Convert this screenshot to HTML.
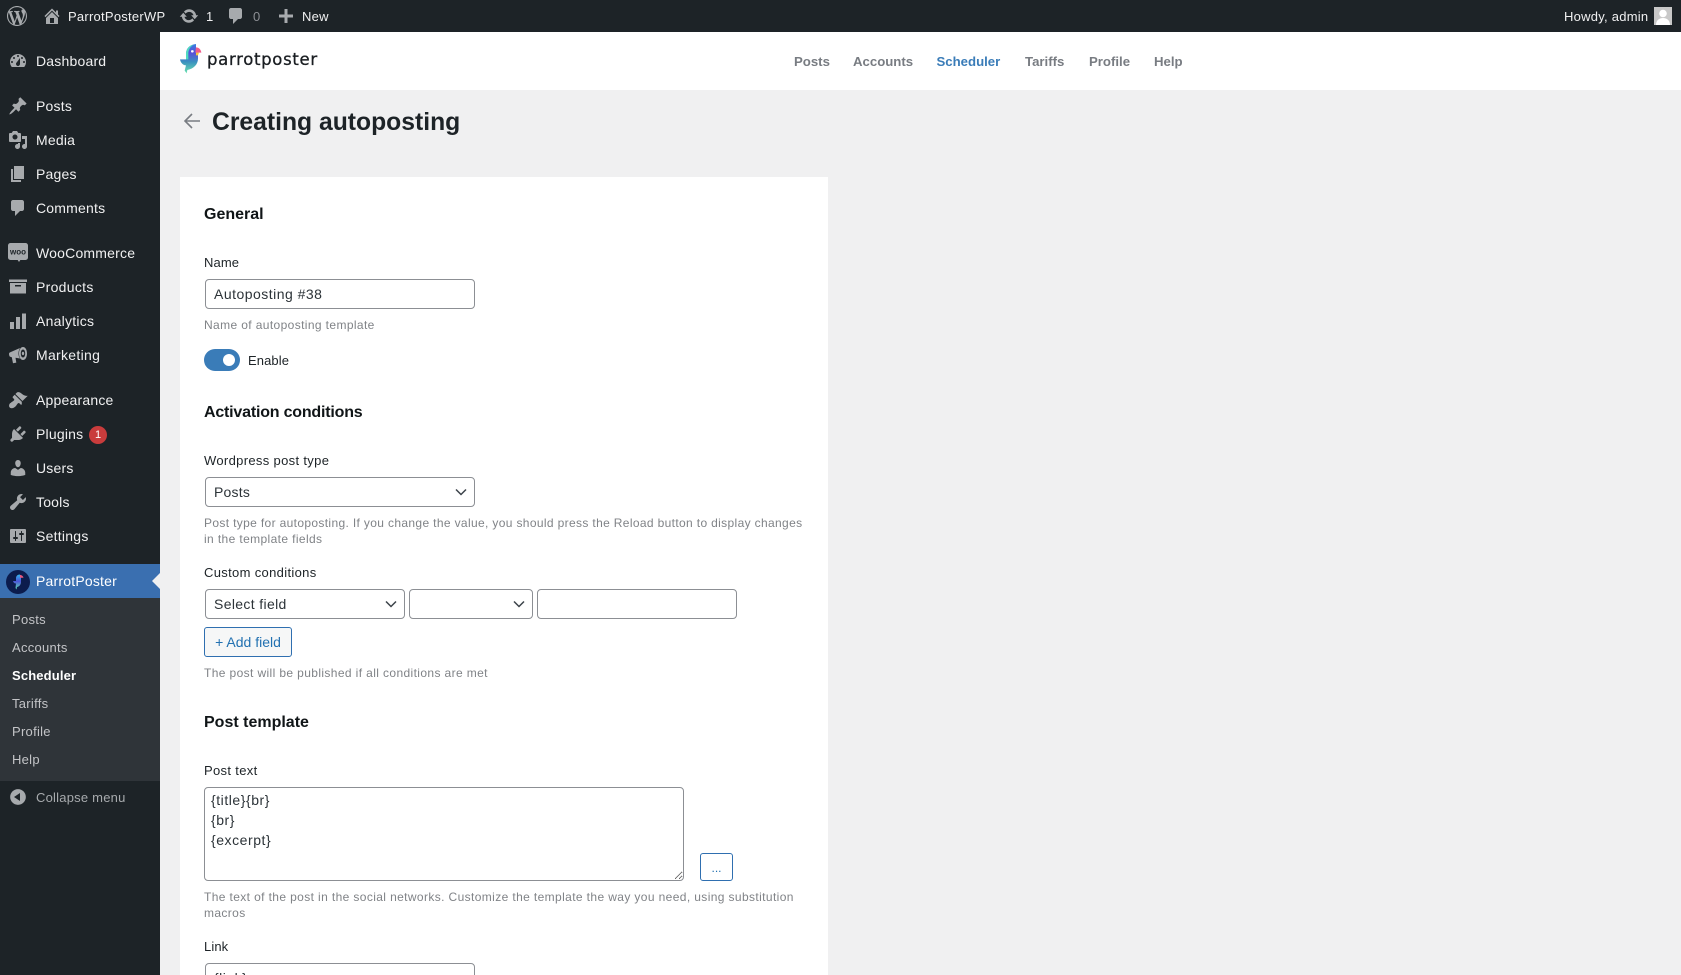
<!DOCTYPE html>
<html lang="en"><head><meta charset="utf-8"><title>Creating autoposting</title>
<style>
*{box-sizing:border-box}
html,body{margin:0;padding:0;width:1681px;height:975px;overflow:hidden;background:#f0f0f1;font-family:"Liberation Sans",sans-serif}
#wrap{position:relative;width:1681px;height:975px;overflow:hidden;background:#f0f0f1}
.a{position:absolute}
.t{position:absolute;white-space:nowrap;line-height:20px;height:20px}
.i{position:absolute;width:20px;height:20px;fill:#a7aaad}
#bar{left:0;top:0;width:1681px;height:32px;background:#1d2327}
#bar .t{font-size:13px;color:#f0f0f1;letter-spacing:.25px}
#side{left:0;top:32px;width:160px;height:943px;background:#1d2327}
.m{font-size:14px;color:#f0f0f1;left:36px;letter-spacing:.2px}
.s{font-size:13px;color:#c3c4c7;left:12px;letter-spacing:.28px}
.n{font-size:13.2px;font-weight:700;color:#787c82;top:52px}
h2{margin:0;font-size:16px;font-weight:700;color:#101517;left:204px}
.l{font-size:13px;color:#1d2327;left:204px;letter-spacing:.1px}
.w{letter-spacing:.33px}
.h{font-size:12px;color:#808387;left:204px;letter-spacing:.38px;line-height:16px;height:16px}
.f{position:absolute;background:#fff;border:1px solid #8c8f94;border-radius:4px;font:14px "Liberation Sans",sans-serif;color:#2c3338;padding:0 8px;margin:0;height:30px;appearance:none;-webkit-appearance:none;outline:0;letter-spacing:.48px}
.c{position:absolute;width:12px;height:8px;fill:none;stroke:#3c434a;stroke-width:1.5}
</style></head><body>
<div id="wrap">

<div class="a" id="bar">
<svg class="i" style="left:7px;top:6px" viewBox="0 0 20 20"><path fill-rule="evenodd" d="M20 10c0-5.51-4.49-10-10-10C4.48 0 0 4.49 0 10c0 5.52 4.48 10 10 10 5.51 0 10-4.48 10-10zM7.78 15.37L4.37 6.22c.55-.02 1.17-.08 1.17-.08.5-.06.44-1.13-.06-1.11 0 0-1.45.11-2.37.11-.18 0-.37 0-.58-.01C4.12 2.69 6.87 1.11 10 1.11c2.33 0 4.45.87 6.05 2.34-.68-.11-1.65.39-1.65 1.58 0 .74.45 1.36.9 2.1.35.61.55 1.36.55 2.46 0 1.49-1.4 5-1.4 5l-3.03-8.37c.54-.02.82-.17.82-.17.5-.05.44-1.25-.06-1.22 0 0-1.44.12-2.38.12-.87 0-2.33-.12-2.33-.12-.5-.03-.56 1.2-.06 1.22l.92.08 1.26 3.41zM17.41 10c.24-.64.74-1.87.43-4.25.7 1.29 1.05 2.71 1.05 4.25 0 3.29-1.73 6.24-4.4 7.78.97-2.59 1.94-5.2 2.92-7.78zM6.1 18.09C3.12 16.65 1.11 13.53 1.11 10c0-1.3.23-2.48.72-3.59C3.25 10.3 4.67 14.2 6.1 18.09zm4.03-6.63l2.58 6.98c-.86.29-1.76.45-2.71.45-.79 0-1.57-.11-2.29-.33.81-2.38 1.62-4.74 2.42-7.1z"/></svg>
<svg class="i" style="left:42px;top:6px" viewBox="0 0 20 20"><path fill-rule="evenodd" d="M16 8.5l1.53 1.53-1.06 1.06L10 4.62l-6.47 6.47-1.06-1.06L10 2.5l4 4v-2h2v4zm-6-2.46l6 5.99V18H4v-5.97zM12 17v-5H8v5h4z"/></svg>
<div class="t" style="left:68px;top:7px">ParrotPosterWP</div>
<svg class="i" style="left:179px;top:6px" viewBox="0 0 20 20"><path d="M10.2 3.28c3.53 0 6.43 2.61 6.92 6h2.08l-3.5 4-3.5-4h2.32c-.45-1.97-2.21-3.45-4.32-3.45-1.45 0-2.73.71-3.54 1.78L4.95 5.66C6.23 4.2 8.11 3.28 10.2 3.28zm-.4 13.44c-3.52 0-6.43-2.61-6.92-6H.8l3.5-4c1.17 1.33 2.33 2.67 3.5 4H5.48c.45 1.97 2.21 3.45 4.32 3.45 1.45 0 2.73-.71 3.54-1.78l1.71 1.95c-1.28 1.46-3.15 2.38-5.25 2.38z"/></svg>
<div class="t" style="left:206px;top:7px">1</div>
<svg class="i" style="left:226px;top:6px" viewBox="0 0 20 20"><path d="M5 2h9c1.1 0 2 .9 2 2v7c0 1.100-.9 2-2 2h-2l-5 5v-5H5c-1.100 0-2-.9-2-2V4c0-1.100.9-2 2-2z"/></svg>
<div class="t" style="left:253px;top:7px;color:#8c8f94">0</div>
<svg class="i" style="left:276px;top:6px" viewBox="0 0 20 20"><path d="M17 8.500v3h-5.500V17h-3v-5.500H3v-3h5.500V3h3v5.500z"/></svg>
<div class="t" style="left:302px;top:7px">New</div>
<div class="t" style="left:1564px;top:7px">Howdy, admin</div>
<svg class="a" style="left:1654px;top:7px" width="18" height="18" viewBox="0 0 18 18"><rect width="18" height="18" fill="#c8c8c8"/><circle cx="9" cy="6.500" r="3.800" fill="#fff"/><path d="M2 18c0-4.500 3-7 7-7s7 2.500 7 7z" fill="#fff"/></svg>
</div>

<div class="a" id="side">
<div class="a" style="left:0;top:532px;width:160px;height:34px;background:#3a6fb0"></div>
<div class="a" style="left:0;top:566px;width:160px;height:183px;background:#2f3439"></div>
<div class="a" style="left:152px;top:541px;width:0;height:0;border:8px solid transparent;border-right-color:#f0f0f1;border-left:0"></div>
</div>

<svg class="i" style="left:8px;top:51px" viewBox="0 0 20 20"><path fill-rule="evenodd" d="M3.760 16h12.480c1.100-1.370 1.760-3.110 1.760-5 0-4.420-3.580-8-8-8s-8 3.580-8 8c0 1.890.66 3.630 1.760 5zM10 4c.55 0 1 .45 1 1s-.45 1-1 1-1-.45-1-1 .45-1 1-1zM6 6c.55 0 1 .45 1 1s-.45 1-1 1-1-.45-1-1 .45-1 1-1zm8 0c.55 0 1 .45 1 1s-.45 1-1 1-1-.45-1-1 .45-1 1-1zm-5.370 5.550L12 7v6c0 1.100-.9 2-2 2s-2-.9-2-2c0-.57.24-1.080.63-1.450zM4 10c.55 0 1 .45 1 1s-.45 1-1 1-1-.45-1-1 .45-1 1-1zm12 0c.55 0 1 .45 1 1s-.45 1-1 1-1-.45-1-1 .45-1 1-1z"/></svg>
<div class="t m" style="top:51px">Dashboard</div>
<svg class="i" style="left:8px;top:96px" viewBox="0 0 20 20"><path d="M10.440 3.020l1.820-1.820 6.360 6.350-1.830 1.820c-1.050-.68-2.480-.57-3.410.36l-.75.75c-.92.93-1.040 2.350-.35 3.410l-1.830 1.820-2.410-2.410-2.800 2.790c-.42.42-3.380 2.710-3.800 2.290s1.860-3.390 2.280-3.810l2.790-2.790L4.100 9.360l1.830-1.820c1.050.69 2.480.57 3.400-.36l.75-.75c.93-.92 1.050-2.350.36-3.410z"/></svg>
<div class="t m" style="top:96px">Posts</div>
<svg class="i" style="left:8px;top:130px" viewBox="0 0 20 20"><path fill-rule="evenodd" d="M13 11V4c0-.55-.45-1-1-1h-1.670L9 1H5L3.670 3H2c-.55 0-1 .45-1 1v7c0 .55.45 1 1 1h10c.55 0 1-.45 1-1zM7 4.500c1.380 0 2.500 1.120 2.500 2.500S8.380 9.500 7 9.500 4.500 8.380 4.500 7 5.620 4.500 7 4.500zM14 6h5v10.500c0 1.380-1.120 2.500-2.500 2.500S14 17.880 14 16.500s1.120-2.500 2.500-2.500c.17 0 .34.02.5.05V9h-3V6zm-4 8.050V13h2v3.500c0 1.380-1.120 2.500-2.500 2.500S7 17.880 7 16.500 8.120 14 9.500 14c.17 0 .34.02.5.05z"/></svg>
<div class="t m" style="top:130px">Media</div>
<svg class="i" style="left:8px;top:164px" viewBox="0 0 20 20"><path d="M6 15V2h10v13H6zm-1 1h8v2H3V5h2v11z"/></svg>
<div class="t m" style="top:164px">Pages</div>
<svg class="i" style="left:8px;top:198px" viewBox="0 0 20 20"><path d="M5 2h9c1.100 0 2 .9 2 2v7c0 1.100-.9 2-2 2h-2l-5 5v-5H5c-1.100 0-2-.9-2-2V4c0-1.100.9-2 2-2z"/></svg>
<div class="t m" style="top:198px">Comments</div>

<svg class="i" style="left:8px;top:243px" viewBox="0 0 20 20"><rect x="0" y="0" width="20" height="17" rx="2.500"/><path d="M9 16h4l-2 3z"/><text x="10" y="11.500" text-anchor="middle" font-size="8" font-weight="700" font-family="Liberation Sans" fill="#1d2327">woo</text></svg>
<div class="t m" style="top:243px">WooCommerce</div>
<svg class="i" style="left:8px;top:277px" viewBox="0 0 20 20"><path fill-rule="evenodd" d="M1 2.500h18V5H1zM2 6h16v10.500H2zM7 8v1.500h6V8z"/></svg>
<div class="t m" style="top:277px;letter-spacing:.3px">Products</div>
<svg class="i" style="left:8px;top:311px" viewBox="0 0 20 20"><path d="M2 11h4v7H2zM8 6h4v12H8zM14 2.500h4V18h-4z"/></svg>
<div class="t m" style="top:311px;letter-spacing:.25px">Analytics</div>
<svg class="i" style="left:8px;top:345px" viewBox="0 0 20 20"><path fill-rule="evenodd" d="M1 9c0-.9.500-1.400 1.300-1.700L12 3c-1 1.500-1.500 3.500-1.500 5.500s.5 3.800 1.500 5l-4.500-.7.8 4.800-3.300.6-1.200-6-2-.6C1.500 11.100 1 10.300 1 9zM15 2c2.500 0 4 3 4 6.500S17.500 15 15 15s-4-3-4-6.500S12.500 2 15 2zm0 2.500c-1.300 0-2.200 1.800-2.200 4s.9 4 2.200 4 2.200-1.800 2.200-4-.9-4-2.200-4zm0 2.300c.8 0 1.200.8 1.200 1.700s-.4 1.700-1.200 1.700-1.200-.8-1.200-1.700.4-1.700 1.200-1.700z"/></svg>
<div class="t m" style="top:345px;letter-spacing:.3px">Marketing</div>

<svg class="i" style="left:8px;top:390px" viewBox="0 0 20 20"><path d="M14.480 11.060L7.410 3.990l1.500-1.500c.5-.56 2.300-.47 3.510.32 1.210.8 1.430 1.280 2.910 2.100 1.180.64 2.450 1.260 4.450.85zm-.71.71L6.700 4.700 4.930 6.470c-.39.39-.39 1.020 0 1.410l1.060 1.060c.39.39.39 1.030 0 1.420-.6.6-1.430 1.110-2.210 1.690-.35.26-.7.53-1.010.84C1.430 13.230.28 16.080 1.760 17.560s4.330.32 5.680-1.020c.31-.31.58-.66.85-1.020.57-.78 1.080-1.610 1.690-2.210.39-.39 1.020-.39 1.410 0l1.060 1.060c.39.39 1.020.39 1.410 0z"/></svg>
<div class="t m" style="top:390px">Appearance</div>
<svg class="i" style="left:8px;top:424px" viewBox="0 0 20 20"><path d="M13.110 4.360L9.870 7.600 8 5.730l3.240-3.240c.35-.34 1.050-.2 1.560.32.52.51.66 1.210.31 1.550zm-8 1.770l.91-1.120 9.010 9.010-1.190.84c-.71.71-2.630 1.160-3.820 1.160H6.140L4.900 17.260c-.59.59-1.540.59-2.120 0-.59-.58-.59-1.530 0-2.120l1.240-1.240v-3.880c0-1.130.4-3.190 1.090-3.890zm7.260 3.970l3.240-3.240c.34-.35 1.040-.21 1.550.31.52.51.66 1.210.31 1.550l-3.240 3.250z"/></svg>
<div class="t m" style="top:424px">Plugins</div>
<div class="a" style="left:89px;top:426px;width:18px;height:18px;border-radius:9px;background:#c93c3c;color:#fff;font-size:11px;line-height:18px;text-align:center">1</div>
<svg class="i" style="left:8px;top:458px" viewBox="0 0 20 20"><path d="M10 9.250c-2.270 0-2.730-3.440-2.730-3.440C7 4.020 7.820 2 9.970 2c2.160 0 2.980 2.020 2.710 3.810 0 0-.41 3.440-2.680 3.440zm0 2.570L12.720 10c2.390 0 4.520 2.330 4.520 4.530v2.490s-3.650 1.130-7.240 1.130c-3.650 0-7.240-1.130-7.240-1.130v-2.490c0-2.250 1.940-4.480 4.470-4.480z"/></svg>
<div class="t m" style="top:458px">Users</div>
<svg class="i" style="left:8px;top:492px" viewBox="0 0 20 20"><path d="M16.680 9.770c-1.340 1.340-3.300 1.670-4.950.99l-5.410 6.520c-.99.99-2.590.99-3.580 0s-.99-2.590 0-3.570l6.520-5.420c-.68-1.650-.35-3.610.99-4.950 1.280-1.280 3.120-1.620 4.720-1.060l-2.890 2.890 2.820 2.820 2.860-2.870c.53 1.580.18 3.390-1.080 4.650z"/></svg>
<div class="t m" style="top:492px">Tools</div>
<svg class="i" style="left:8px;top:526px" viewBox="0 0 20 20"><path fill-rule="evenodd" d="M18 16V4c0-.55-.45-1-1-1H3c-.55 0-1 .45-1 1v12c0 .55.45 1 1 1h14c.55 0 1-.45 1-1zM8 11h1c.55 0 1 .45 1 1s-.45 1-1 1H8v1.500c0 .28-.22.5-.5.5s-.5-.22-.5-.5V13H6c-.55 0-1-.45-1-1s.45-1 1-1h1V5.500c0-.28.22-.5.5-.5s.5.22.5.5V11zm5-2h-1c-.55 0-1-.45-1-1s.45-1 1-1h1V5.500c0-.28.22-.5.5-.5s.5.22.5.5V7h1c.55 0 1 .45 1 1s-.45 1-1 1h-1v5.500c0 .28-.22.5-.5.5s-.5-.22-.5-.5V9z"/></svg>
<div class="t m" style="top:526px;letter-spacing:.25px">Settings</div>

<svg class="a" style="left:6px;top:570px" width="24" height="24" viewBox="0 0 24 24"><defs><linearGradient id="g2" x1="0" y1="0" x2="0" y2="1"><stop offset="0" stop-color="#35b6ee"/><stop offset=".45" stop-color="#4b55d8"/><stop offset="1" stop-color="#5fe0b0"/></linearGradient></defs><circle cx="12" cy="12" r="12" fill="#0c1c4d"/><path d="M14 4.500c-2.500 0-4 1.500-4 3.800V11H7c.3 1.500 1.500 2.500 3 2.500L9.500 18l1 1.500.5-2.500c2.500-.5 4-2.500 4-5V8z" fill="url(#g2)"/><path d="M14 5c2 0 3.200 1.300 3.500 2.800H14z" fill="#e8567f"/></svg>
<div class="t m" style="top:571px;color:#fff">ParrotPoster</div>
<div class="t s" style="top:610px">Posts</div>
<div class="t s" style="top:638px">Accounts</div>
<div class="t s" style="top:666px;color:#fff;font-weight:700;letter-spacing:.15px">Scheduler</div>
<div class="t s" style="top:694px">Tariffs</div>
<div class="t s" style="top:722px">Profile</div>
<div class="t s" style="top:750px">Help</div>
<svg class="i" style="left:8px;top:787px" viewBox="0 0 20 20"><path fill-rule="evenodd" d="M10 2.160c4.330 0 7.840 3.510 7.840 7.840s-3.510 7.840-7.840 7.840S2.160 14.330 2.160 10 5.710 2.160 10 2.160zm2 11.840V6l-6 4z"/></svg>
<div class="t m" style="top:788px;font-size:13px;color:#a7aaad;letter-spacing:.22px">Collapse menu</div>

<div class="a" style="left:160px;top:32px;width:1521px;height:58px;background:#fff"></div>
<svg class="a" style="left:170px;top:30px" width="100" height="50" viewBox="0 0 300 150"><defs><linearGradient id="g1" x1="0" y1="0" x2="0" y2="1"><stop offset="0" stop-color="#3a7fe0"/><stop offset=".3" stop-color="#5a4fd8"/><stop offset=".6" stop-color="#3a8fc0"/><stop offset="1" stop-color="#6be3b0"/></linearGradient></defs><path d="M78 42C60 44 48 54 48 72V88H30c2 10 9 18 18 18l-4 16 6 8 2-10c18-3 32-16 32-34V68H78z" fill="url(#g1)"/><path d="M72 43C56 47 48 58 48 72V88H55V70C55 58 62 49 72 43Z" fill="#4fdcc0"/><path d="M78 52c9 0 15 7 16 16H76z" fill="#ef5c8a"/><path d="M78 68h9l-3 8h-6z" fill="#f7c63c"/><ellipse cx="67" cy="64" rx="4" ry="3.500" fill="#fff"/></svg>
<div class="t" id="brand" style="left:207px;top:50px;font-family:'DejaVu Sans',sans-serif;font-size:16.5px;color:#1a1e22;letter-spacing:.68px;-webkit-text-stroke:.3px #1a1e22">parrotposter</div>
<div class="t n" style="left:794px">Posts</div>
<div class="t n" style="left:853px">Accounts</div>
<div class="t n" style="left:936.5px;color:#3a7cb8">Scheduler</div>
<div class="t n" style="left:1025px">Tariffs</div>
<div class="t n" style="left:1089px">Profile</div>
<div class="t n" style="left:1154px">Help</div>

<svg class="a" style="left:183px;top:112px" width="18" height="18" viewBox="0 0 18 18" fill="none" stroke="#787c82" stroke-width="1.600"><path d="M17 9H2M9 2L2 9l7 7"/></svg>
<div class="t" style="left:212px;top:108px;height:30px;line-height:30px;font-size:24.7px;font-weight:700;color:#1d2327">Creating autoposting</div>

<div class="a" style="left:180px;top:177px;width:648px;height:798px;background:#fff"></div>
<h2 class="t" style="top:204.5px">General</h2>
<div class="t l" style="top:252.5px">Name</div>
<input class="f" style="left:205px;top:279px;width:270px" value="Autoposting #38">
<div class="t h" style="top:317px">Name of autoposting template</div>
<div class="a" style="left:204px;top:349px;width:36px;height:22px;border-radius:11px;background:#3a7cb8"></div>
<div class="a" style="left:223px;top:354px;width:12px;height:12px;border-radius:6px;background:#fff"></div>
<div class="t l" style="left:248px;top:350.5px">Enable</div>

<h2 class="t" style="top:403px;letter-spacing:-.2px">Activation conditions</h2>
<div class="t l w" style="top:450.5px">Wordpress post type</div>
<select class="f" style="left:205px;top:477px;width:270px;letter-spacing:.2px"><option>Posts</option></select>
<svg class="c" style="left:455px;top:488px" viewBox="0 0 12 8"><path d="M1 1.500l5 5 5-5"/></svg>
<div class="t h" style="top:515px;letter-spacing:.35px">Post type for autoposting. If you change the value, you should press the Reload button to display changes</div>
<div class="t h" style="top:531px">in the template fields</div>
<div class="t l w" style="top:562.5px">Custom conditions</div>
<select class="f" style="left:205px;top:589px;width:200px;letter-spacing:.35px"><option>Select field</option></select>
<svg class="c" style="left:385px;top:600px" viewBox="0 0 12 8"><path d="M1 1.500l5 5 5-5"/></svg>
<select class="f" style="left:409px;top:589px;width:124px"><option></option></select>
<svg class="c" style="left:513px;top:600px" viewBox="0 0 12 8"><path d="M1 1.500l5 5 5-5"/></svg>
<input class="f" style="left:537px;top:589px;width:200px">
<div class="a" style="left:204px;top:627px;width:88px;height:30px;border:1px solid #2f6fb0;border-radius:3px;background:#f6f7f7;color:#2271b1;font-size:14px;line-height:28px;text-align:center">+ Add field</div>
<div class="t h" style="top:665px">The post will be published if all conditions are met</div>

<h2 class="t" style="top:712.5px">Post template</h2>
<div class="t l w" style="top:760.5px">Post text</div>
<textarea class="f" style="left:204px;top:787px;width:480px;height:94px;padding:2px 6px;line-height:20px;resize:both;letter-spacing:.55px">{title}{br}
{br}
{excerpt}</textarea>
<div class="a" style="left:700px;top:853px;width:33px;height:28px;border:1px solid #2f6fb0;border-radius:3px;background:#fff;color:#2271b1;font-size:12px;line-height:28px;text-align:center">...</div>
<div class="t h" style="top:889px">The text of the post in the social networks. Customize the template the way you need, using substitution</div>
<div class="t h" style="top:905px">macros</div>
<div class="t l" style="top:936.5px">Link</div>
<input class="f" style="left:205px;top:963px;width:270px" value="{link}">
</div>
</body></html>
